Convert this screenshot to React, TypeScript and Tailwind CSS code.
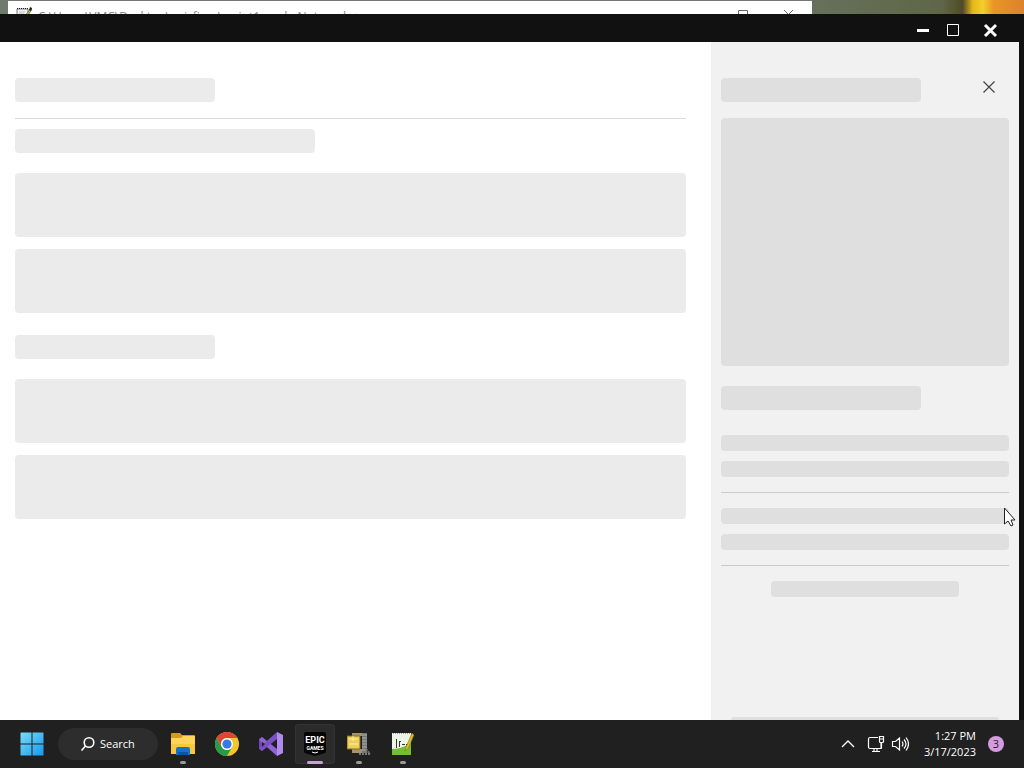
import type { ReactNode } from "react";

function Bar({ className }: { className: string }) {
  return <div className={`rounded-sm ${className}`} />;
}

function NotepadIcon() {
  return (
    <svg viewBox="0 0 16 16" className="h-4 w-4 shrink-0" aria-hidden="true">
      <path d="M1 2h11v13H1z" fill="#f5f5f5" stroke="#777" />
      <path d="M1 1.5h11" stroke="#222" strokeDasharray="1 1" />
      <path d="M3 5h6M3 7h5" stroke="#bbb" />
      <path d="M15 1 9 9l-1 3 3-2 5-8z" fill="#d8ca25" stroke="#333" strokeWidth=".6" />
      <path d="m14 0 2 1-1 3-2-1z" fill="#222" />
    </svg>
  );
}

function BackgroundWindow() {
  return (
    <div className="flex h-3.5 shrink-0 overflow-hidden bg-[linear-gradient(90deg,#6f7b6c_0%,#66705a_80%,#5f6648_92%,#4f4b24_94%,#e5b71b_95%,#f4cf2c_96%,#e99625_97%,#dc822c_100%)] pl-2">
      <div className="mr-[212px] flex h-8 min-w-0 flex-1 items-start border-t border-[#777] bg-white pr-4 pl-2">
        <div className="flex min-w-0 flex-1 items-center gap-1.5 pt-1">
          <NotepadIcon />
          <span className="truncate pt-1 text-xs text-[#888]">C:\Users\VMC\Desktop\epicfixer\script1.cmd - Notepad++</span>
        </div>
        <svg viewBox="0 0 60 12" className="mt-2 h-3 w-[60px] shrink-0" fill="none" stroke="#666" aria-hidden="true">
          <path d="M2.5 1.5h9v9h-9zM48 1l9 9M57 1l-9 9" />
        </svg>
      </div>
    </div>
  );
}

function TitleBar() {
  return (
    <header className="flex h-7 shrink-0 items-center justify-end gap-4 rounded-tr-md bg-[#111] pt-1 pr-[26px] text-white">
      <button aria-label="Minimize" className="flex h-4 w-3.5 items-center">
        <svg viewBox="0 0 14 16" className="h-4 w-3.5"><path d="M1 8.5h12" stroke="currentColor" strokeWidth="3" /></svg>
      </button>
      <button aria-label="Maximize" className="h-4 w-3.5">
        <svg viewBox="0 0 14 16" className="h-4 w-3.5" fill="none"><path d="M1.5 2.5h11v11h-11z" stroke="currentColor" /></svg>
      </button>
      <button aria-label="Close" className="ml-1.5 h-4 w-4">
        <svg viewBox="0 0 16 16" className="h-4 w-4"><path d="m3 3 11 11M14 3 3 14" stroke="currentColor" strokeWidth="3" /></svg>
      </button>
    </header>
  );
}

function MainSkeleton() {
  return (
    <main className="min-w-0 flex-1 bg-white pt-9 pr-[25px] pl-[15px]">
      <Bar className="h-6 w-[200px] bg-[#ebebeb]" />
      <hr className="mt-4 mb-2.5 border-[#dadada]" />
      <Bar className="h-6 w-[300px] bg-[#ebebeb]" />
      <Bar className="mt-5 h-16 bg-[#ebebeb]" />
      <Bar className="mt-3 h-16 bg-[#ebebeb]" />
      <Bar className="mt-[22px] h-6 w-[200px] bg-[#ebebeb]" />
      <Bar className="mt-5 h-16 bg-[#ebebeb]" />
      <Bar className="mt-3 h-16 bg-[#ebebeb]" />
    </main>
  );
}

function DetailSkeleton() {
  return (
    <aside className="flex w-[308px] shrink-0 flex-col bg-[#f1f1f1] px-2.5 pt-9">
      <div className="flex items-center justify-between">
        <Bar className="h-6 w-[200px] bg-[#dfdfdf]" />
        <button aria-label="Close panel" className="mr-3 mb-1.5 h-4 w-4 text-[#444]">
          <svg viewBox="0 0 16 16" className="h-4 w-4"><path d="m2.5 2.5 11 11M13.5 2.5l-11 11" stroke="currentColor" strokeWidth="1.2" /></svg>
        </button>
      </div>
      <Bar className="mt-4 h-[248px] bg-[#dfdfdf]" />
      <Bar className="mt-5 h-6 w-[200px] bg-[#dfdfdf]" />
      <Bar className="mt-[25px] h-4 bg-[#dfdfdf]" />
      <Bar className="mt-2.5 h-4 bg-[#dfdfdf]" />
      <hr className="my-[15px] border-[#cbcbcb]" />
      <Bar className="h-4 bg-[#dfdfdf]" />
      <Bar className="mt-2.5 h-4 bg-[#dfdfdf]" />
      <hr className="my-[15px] border-[#cbcbcb]" />
      <Bar className="mx-[50px] h-4 bg-[#dfdfdf]" />
      <div className="mx-2.5 mt-auto h-[3px] rounded-t-sm bg-[#dfdfdf]" />
    </aside>
  );
}

function WindowsLogo() {
  return (
    <svg viewBox="0 0 24 24" className="h-6 w-6" aria-hidden="true">
      <defs>
        <linearGradient id="win" x1="0" y1="0" x2="1" y2="1">
          <stop stopColor="#79dcfb" /><stop offset="1" stopColor="#1698ed" />
        </linearGradient>
      </defs>
      <path d="M1 .5h10.5v11H.5V1zM12.5.5H23l.5.5v10.5h-11zM.5 12.5h11v11H1L.5 23zM12.5 12.5h11V23l-.5.5H12.5z" fill="url(#win)" />
    </svg>
  );
}

function ExplorerIcon() {
  return (
    <svg viewBox="0 0 24 24" className="h-6 w-6" aria-hidden="true">
      <path d="M0 2q0-1 1-1h8l2 2h12q1 0 1 1v4H0z" fill="#d79a18" />
      <path d="M0 6h10l2-2h11q1 0 1 1v17H0z" fill="#ffd45a" />
      <path d="M0 12h24v9q0 1-1 1H1q-1 0-1-1z" fill="#f8c63f" />
      <path d="M5 23v-6q0-2 2-2h10q2 0 2 2v6z" fill="#1473c8" />
      <path d="M7 23v-3h10v3z" fill="#0c559d" />
    </svg>
  );
}

function ChromeIcon() {
  return (
    <svg viewBox="0 0 24 24" className="h-6 w-6" aria-hidden="true">
      <circle cx="12" cy="12" r="12" fill="#f4c62b" />
      <path d="M1.6 6A12 12 0 0 1 22.4 6H12a6 6 0 0 0-5.2 9z" fill="#df4438" />
      <path d="M1.6 6A12 12 0 0 0 12 24l5.2-9A6 6 0 0 1 6.8 15z" fill="#269b4b" />
      <circle cx="12" cy="12" r="6" fill="white" />
      <circle cx="12" cy="12" r="4.6" fill="#3979e7" />
    </svg>
  );
}

function VisualStudioIcon() {
  return (
    <svg viewBox="0 0 24 24" className="h-6 w-6" aria-hidden="true">
      <path d="M0 7v10l3 2 4-4-3-3 3-3-4-4z" fill="#7045b5" />
      <path d="m3 5 15 12v7L0 8z" fill="#9063d5" />
      <path d="m0 16 3 3L18 7V0z" fill="#7a50c4" />
      <path d="m18 0 6 3v18l-6 3z" fill="#b18bec" />
      <path d="M3 10v5l3-3z" fill="#202020" />
      <path d="m18 8-5 4 5 4z" fill="#202020" />
    </svg>
  );
}

function EpicIcon() {
  return (
    <svg viewBox="0 0 22 24" className="h-6 w-[22px]" aria-hidden="true">
      <path d="M2 0h18q2 0 2 2v17q0 1-1 2l-10 3-10-3q-1-1-1-2V2q0-2 2-2" fill="#050505" />
      <text x="11" y="11" textAnchor="middle" className="fill-white font-['Roboto',sans-serif] text-[9px] font-bold">EPIC</text>
      <text x="11" y="18" textAnchor="middle" className="fill-white font-['Roboto',sans-serif] text-[5px] font-bold">GAMES</text>
      <path d="m8 20 3 1 3-1" stroke="white" fill="none" />
    </svg>
  );
}

function ArchiveIcon() {
  return (
    <svg viewBox="0 0 24 24" className="h-6 w-6" aria-hidden="true">
      <path d="M5 1h14v3H5zM5 17h11v4H5z" fill="#a49469" />
      <path d="M0 4h13v13H0z" fill="#edce59" stroke="#826c29" />
      <path d="M6 4v5M2 7h9M2 12h9" stroke="#fff1a0" />
      <path d="M15 1h5v20h-5z" fill="#777" />
      <path d="M15 3h5M15 6h5M15 9h5M15 12h5M15 15h5M15 18h5" stroke="#aaa" />
      <path d="M12 22h11M19 17l4 5" stroke="#777" strokeWidth="2" strokeDasharray="2 1" />
    </svg>
  );
}

function NotepadPlusIcon() {
  return (
    <svg viewBox="0 0 24 24" className="h-6 w-6" aria-hidden="true">
      <path d="M1 1h19v22H1z" fill="#edf5e9" />
      <path d="M1 17q9 0 19-6v12H1z" fill="#74bd35" />
      <path d="M2 1.5h17" stroke="#999" strokeDasharray="1 1" />
      <path d="M5.5 7v9M8.5 9v6M8 9.5h2M11 12.5h3M15 12.5h2" stroke="#333" />
      <path d="m21 1 2 2-6 14-3 2 1-4z" fill="#d5bd22" stroke="#796a18" strokeWidth=".5" />
    </svg>
  );
}

function TaskItem({ label, children, state = "none" }: { label: string; children: ReactNode; state?: "none" | "running" | "active" }) {
  return (
    <button aria-label={label} className={`relative flex h-10 w-10 shrink-0 items-center justify-center rounded ${state === "active" ? "bg-[#2b2b2b] ring-1 ring-[#333] ring-inset" : ""}`}>
      {children}
      {state === "running" && <span className="absolute bottom-0 h-[3px] w-1.5 rounded-full bg-[#999]" />}
      {state === "active" && <span className="absolute bottom-0 h-[3px] w-4 rounded-full bg-[#cda0d5]" />}
    </button>
  );
}

function Taskbar() {
  return (
    <footer className="flex h-12 shrink-0 items-center justify-between bg-[#202020] pr-5 pl-3 text-white">
      <nav aria-label="Taskbar" className="flex items-center gap-1">
        <TaskItem label="Start"><WindowsLogo /></TaskItem>
        <button className="mr-px ml-0.5 flex h-8 w-[100px] items-center gap-1 rounded-full bg-[#2d2d2d] pl-[22px] text-[11px]">
          <svg viewBox="0 0 16 16" className="h-4 w-4" fill="none" stroke="currentColor" strokeWidth="1.6" aria-hidden="true"><circle cx="9" cy="6.5" r="4.8" /><path d="m5.5 10-4 4.5" /></svg>
          Search
        </button>
        <TaskItem label="File Explorer" state="running"><ExplorerIcon /></TaskItem>
        <TaskItem label="Chrome"><ChromeIcon /></TaskItem>
        <TaskItem label="Visual Studio"><VisualStudioIcon /></TaskItem>
        <TaskItem label="Epic Games" state="active"><EpicIcon /></TaskItem>
        <TaskItem label="Archive" state="running"><ArchiveIcon /></TaskItem>
        <TaskItem label="Notepad++" state="running"><NotepadPlusIcon /></TaskItem>
      </nav>
      <div className="flex items-center">
        <button aria-label="Show hidden icons" className="mr-3">
          <svg viewBox="0 0 14 16" className="h-4 w-3.5" fill="none" stroke="currentColor" strokeWidth="1.3"><path d="m1 11 6-6 6 6" /></svg>
        </button>
        <button aria-label="Network and volume" className="mr-[15px] flex gap-1.5">
          <svg viewBox="0 0 18 18" className="h-[18px] w-[18px]" fill="none" stroke="currentColor" strokeWidth="1.2"><path d="M11 2.5H3q-1.5 0-1.5 1.5v8q0 1.5 1.5 1.5h11V8M5 16.5h8M7 13.5v3M10 13.5v3M12.5 1.5h4v5q0 1-1 1h-2q-1 0-1-1zM12.5 4h4M14.5 7.5v6" /></svg>
          <svg viewBox="0 0 18 18" className="h-[18px] w-[18px]" fill="none" stroke="currentColor" strokeWidth="1.2"><path d="M1.5 6.5h3L8.5 3v12l-4-3.5h-3zM11 6.5q2 2.5 0 5M13 4.5q4 4.5 0 9M15 2.5q5 6.5 0 13" /></svg>
        </button>
        <button className="mr-3 text-right text-[11px] leading-4"><span className="block">1:27 PM</span><span className="block">3/17/2023</span></button>
        <button aria-label="3 notifications" className="flex h-4 w-4 items-center justify-center rounded-full bg-[#d49bdd] text-[11px] leading-4 text-[#222]">3</button>
      </div>
    </footer>
  );
}

export default function App() {
  return (
    <div className="relative flex min-h-screen flex-col bg-[#111] font-['Open_Sans','Noto_Sans',sans-serif]">
      <BackgroundWindow />
      <TitleBar />
      <div className="flex flex-1 pr-[5px]"><MainSkeleton /><DetailSkeleton /></div>
      <Taskbar />
      <svg viewBox="0 0 13 20" className="pointer-events-none absolute top-[507px] right-2 h-5 w-[13px]" aria-hidden="true">
        <path d="M1.5 1v16l3.5-3 3 5 2-1-2-5h4z" fill="white" stroke="#222" />
      </svg>
    </div>
  );
}
